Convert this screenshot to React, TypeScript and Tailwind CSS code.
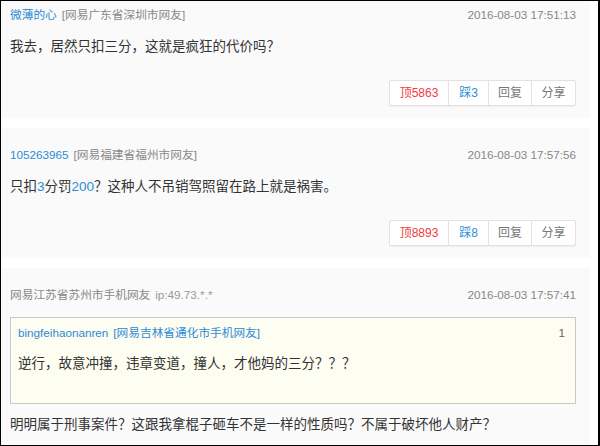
const font = { fontFamily: '"Liberation Sans", "Noto Sans CJK SC", sans-serif' }

type Vote = { up: number; down: number }

const Actions = ({ up, down }: Vote) => (
  <div className="flex justify-end mt-[22px]">
    <div className="flex h-[26px] bg-white border border-[#e2e2e2] rounded-[2px] shadow-[0_1px_1px_rgba(0,0,0,0.05)] text-xs">
      <button className="w-[58px] flex items-center justify-center text-[#f23c3c]">顶{up}</button>
      <button className="w-[40px] flex items-center justify-center text-[#2a8fd8] border-l border-[#e2e2e2]">踩{down}</button>
      <button className="w-[43px] flex items-center justify-center text-[#777] border-l border-[#e2e2e2]">回复</button>
      <button className="w-[44px] flex items-center justify-center text-[#777] border-l border-[#e2e2e2]">分享</button>
    </div>
  </div>
)

const Meta = ({ children, time }: { children: React.ReactNode; time: string }) => (
  <div className="flex items-center justify-between text-[11.7px] leading-[20px]">
    <div className="flex items-center gap-[5px]">{children}</div>
    <span className="text-[#888]">{time}</span>
  </div>
)

export default function App() {
  return (
    <div className="w-[600px] h-[446px] bg-white border border-black border-r-2 overflow-hidden" style={font}>
      <div className="-mt-[13px] pr-[8px] flex flex-col gap-[10px]">
        {/* comment 1 */}
        <div className="bg-[#fafafa] pt-[17px] pb-[12px] pl-[9px] pr-[14px]">
          <Meta time="2016-08-03 17:51:13">
            <span className="text-[#2b8bd6]">微薄的心</span>
            <span className="text-[#888]">[网易广东省深圳市网友]</span>
          </Meta>
          <p className="mt-[11px] text-[13.5px] leading-[22px] text-[#333]">我去，居然只扣三分，这就是疯狂的代价吗？</p>
          <Actions up={5863} down={3} />
        </div>

        {/* comment 2 */}
        <div className="bg-[#fafafa] pt-[17px] pb-[12px] pl-[9px] pr-[14px]">
          <Meta time="2016-08-03 17:57:56">
            <span className="text-[#2b8bd6]">105263965</span>
            <span className="text-[#888]">[网易福建省福州市网友]</span>
          </Meta>
          <p className="mt-[11px] text-[13.5px] leading-[22px] text-[#333]">
            只扣<span className="text-[#2b8bd6]">3</span>分罚<span className="text-[#2b8bd6]">200</span>？这种人不吊销驾照留在路上就是祸害。
          </p>
          <Actions up={8893} down={8} />
        </div>

        {/* comment 3 with quote */}
        <div className="bg-[#fafafa] pt-[17px] pb-[12px] pl-[9px] pr-[14px]">
          <Meta time="2016-08-03 17:57:41">
            <span className="text-[#888]">网易江苏省苏州市手机网友</span>
            <span className="text-[#999]">ip:49.73.*.*</span>
          </Meta>
          <div className="mt-[12px] bg-[#fdfdf1] border border-[#c9c9c9] pt-[5px] pb-[28px] pl-[7px] pr-[10px]">
            <div className="flex items-center justify-between text-[11.7px] leading-[20px]">
              <div className="flex gap-[5px] text-[#2b8bd6]">
                <span>bingfeihaonanren</span>
                <span>[网易吉林省通化市手机网友]</span>
              </div>
              <span className="text-[#666]">1</span>
            </div>
            <p className="mt-[10px] text-[13.5px] leading-[22px] text-[#333]">逆行，故意冲撞，违章变道，撞人，才他妈的三分？？？</p>
          </div>
          <p className="mt-[10px] text-[13.5px] leading-[22px] text-[#333]">明明属于刑事案件？这跟我拿棍子砸车不是一样的性质吗？不属于破坏他人财产？</p>
        </div>
      </div>
    </div>
  )
}
